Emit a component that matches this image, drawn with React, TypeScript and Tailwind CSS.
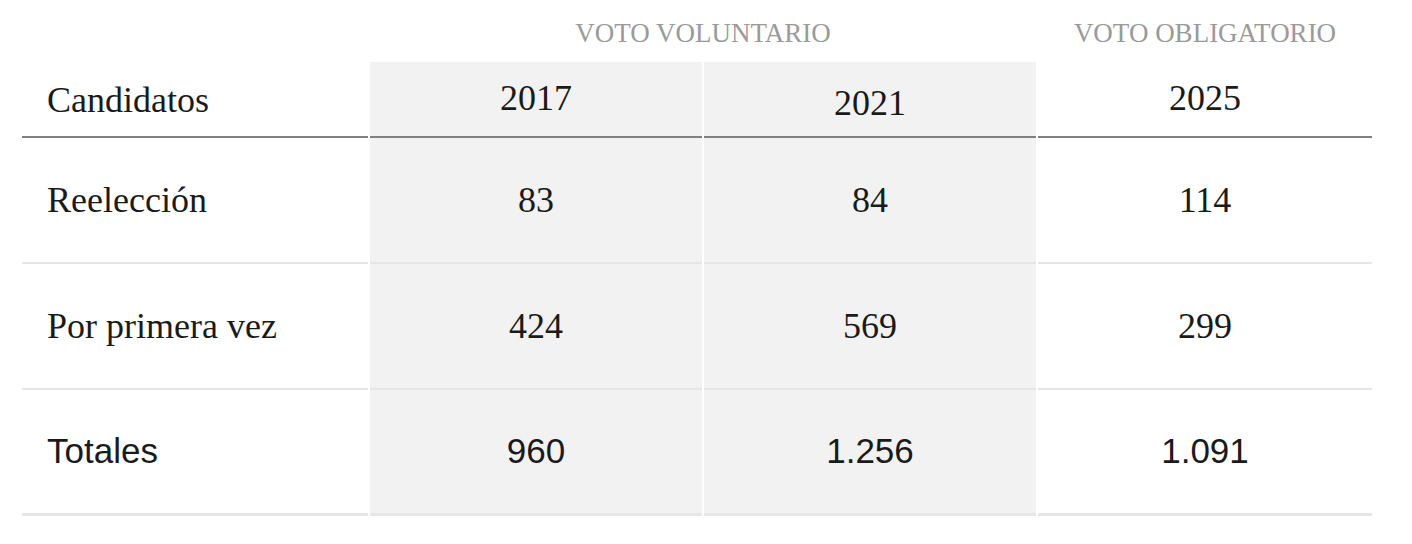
import React from "react";

const rows = [
  { label: "Reelección", v: ["83", "84", "114"] },
  { label: "Por primera vez", v: ["424", "569", "299"] },
];

const totals = [
  { t: "Totales", first: true, gray: false },
  { t: "960", first: false, gray: true },
  { t: "1.256", first: false, gray: true },
  { t: "1.091", first: false, gray: false },
];

export default function App() {
  return (
    <div className="w-[1412px] h-[544px] bg-white pl-[22px] text-[#1a1a1a] font-['Liberation_Serif',serif]">
      <div className="grid grid-cols-[346px_332px_332px_334px] gap-x-[2px] w-[1350px]">
        {/* group headers */}
        <div className="h-[62px]" />
        <div className="col-span-2 h-[62px] flex items-center justify-center text-[27px] text-[#9a9a9a] pt-[4px]">
          VOTO VOLUNTARIO
        </div>
        <div className="h-[62px] flex items-center justify-center text-[27px] text-[#9a9a9a] pt-[4px]">
          VOTO OBLIGATORIO
        </div>

        {/* header row */}
        <div className="h-[76px] flex items-center pl-[25px] text-[36px] border-b-2 border-[#7f7f7f] pt-[2px]">
          Candidatos
        </div>
        <div className="h-[76px] flex items-center justify-center text-[36px] bg-[#f2f2f2] border-b-2 border-[#7f7f7f] pb-[2px]">
          2017
        </div>
        <div className="h-[76px] flex items-center justify-center text-[36px] bg-[#f2f2f2] border-b-2 border-[#7f7f7f] pt-[8px]">
          2021
        </div>
        <div className="h-[76px] flex items-center justify-center text-[36px] border-b-2 border-[#7f7f7f] pb-[2px]">
          2025
        </div>

        {rows.map((r) => (
          <React.Fragment key={r.label}>
            <div className="h-[126px] flex items-center pl-[25px] text-[36px] border-b-2 border-[#e6e6e6]">
              {r.label}
            </div>
            <div className="h-[126px] flex items-center justify-center text-[36px] bg-[#f2f2f2] border-b-2 border-[#e6e6e6]">
              {r.v[0]}
            </div>
            <div className="h-[126px] flex items-center justify-center text-[36px] bg-[#f2f2f2] border-b-2 border-[#e6e6e6]">
              {r.v[1]}
            </div>
            <div className="h-[126px] flex items-center justify-center text-[36px] border-b-2 border-[#e6e6e6]">
              {r.v[2]}
            </div>
          </React.Fragment>
        ))}

        {/* totals */}
        {totals.map((c) => (
          <div
            key={c.t}
            className={
              "h-[126px] flex items-center text-[35px] font-['Liberation_Sans',Arial,sans-serif] border-b-[3px] border-[#e6e6e6] " +
              (c.first ? "pl-[25px] " : "justify-center ") +
              (c.gray ? "bg-[#f2f2f2]" : "")
            }
          >
            {c.t}
          </div>
        ))}
      </div>
    </div>
  );
}
